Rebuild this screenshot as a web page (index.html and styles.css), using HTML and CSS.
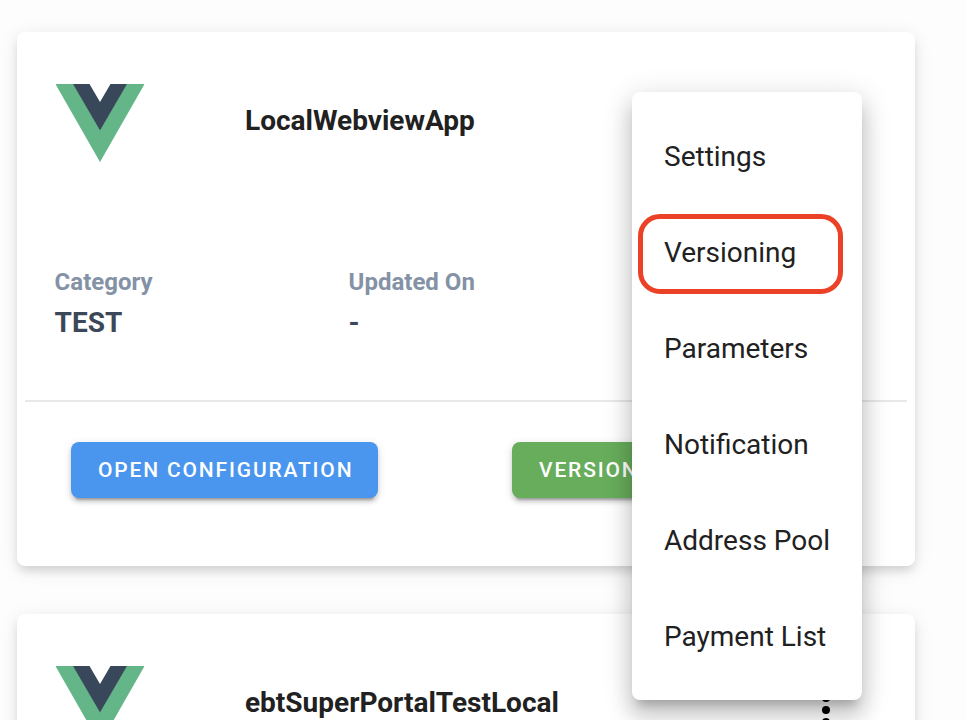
FILE: index.html
```html
<!DOCTYPE html>
<html lang="en">
<head>
<meta charset="utf-8">
<title>Apps</title>
<link rel="stylesheet" href="styles.css">
</head>
<body>
<main class="list">
  <article class="card">
    <header class="card-head">
      <svg class="logo" viewBox="0 0 88 78"><path fill="#64b587" d="M0 0H17.5L44 46 70.5 0H88V1L44 78 0 1Z"/><path fill="#384759" d="M17 0H33.5L44 18 54.500 0H71L44 46.500Z"/></svg>
      <h2 class="name">LocalWebviewApp</h2>
    </header>
    <dl class="facts">
      <div><dt>Category</dt><dd>TEST</dd></div>
      <div><dt>Updated On</dt><dd>-</dd></div>
    </dl>
    <hr class="rule">
    <div class="actions">
      <button class="btn blue">OPEN CONFIGURATION</button>
      <button class="btn green">VERSIONS</button>
    </div>
  </article>
  <article class="card">
    <header class="card-head">
      <svg class="logo" viewBox="0 0 88 78"><path fill="#64b587" d="M0 0H17.5L44 46 70.5 0H88V1L44 78 0 1Z"/><path fill="#384759" d="M17 0H33.5L44 18 54.500 0H71L44 46.500Z"/></svg>
      <h2 class="name">ebtSuperPortalTestLocal</h2>
      <svg class="dots" viewBox="0 0 8 32"><circle cx="4" cy="4" r="4"/><circle cx="4" cy="16" r="4"/><circle cx="4" cy="28" r="4"/></svg>
    </header>
  </article>
</main>
<nav class="menu">
  <a class="item">Settings</a>
  <a class="item marked">Versioning</a>
  <a class="item">Parameters</a>
  <a class="item">Notification</a>
  <a class="item">Address Pool</a>
  <a class="item">Payment List</a>
</nav>
</body>
</html>
```
FILE: styles.css
```css
*, *::after { box-sizing: border-box; }
html { overflow: hidden; }
body {
  margin: 0;
  height: 720px;
  overflow: hidden;
  position: relative;
  background: #fdfdfd;
  color: #212121;
  font-family: Roboto, sans-serif;
}
.list {
  display: flex;
  flex-direction: column;
  gap: 48px;
  width: 915px;
  padding: 32px 0 0 17px;
}
.card {
  height: 534px;
  flex: none;
  padding: 52px 8px 0;
  border-radius: 8px;
  background: #fff;
  box-shadow: 0 6px 10px -2px rgba(0,0,0,.12), 0 4px 18px rgba(0,0,0,.1);
}
.card-head {
  display: flex;
  height: 184px;
  padding-left: 31px;
}
.logo { width: 88px; height: 78px; }
.name {
  margin: 19px 0 0 101px;
  width: 400px;
  font-size: 28px;
  line-height: 36px;
  font-weight: 700;
}
.dots { width: 8px; height: 32px; margin: 28px 0 0 176.6px; }
.facts {
  display: flex;
  margin: 0 0 0 29.600px;
  height: 132px;
}
.facts div { width: 294px; }
dt {
  color: #8492a6;
  font-size: 24px;
  line-height: 28px;
  font-weight: 700;
}
dd {
  margin: 9px 0 0;
  color: #3c4858;
  font-size: 28px;
  line-height: 36px;
  font-weight: 700;
}
.rule {
  margin: 0;
  border: 0;
  height: 2px;
  background: #e8e8e8;
}
.actions {
  display: flex;
  gap: 134px;
  padding: 40px 0 0 46px;
}
.btn {
  height: 56px;
  padding: 0 0 0 27px;
  border: 0;
  border-radius: 8px;
  color: #fff;
  font: 500 21px Roboto, sans-serif;
  letter-spacing: 1.83px;
  text-align: left;
  white-space: nowrap;
  box-shadow: 0 6px 2px -4px rgba(0,0,0,.2), 0 4px 4px rgba(0,0,0,.14), 0 2px 10px rgba(0,0,0,.12);
}
.blue { width: 307px; background: #4a95ee; }
.green { width: 200px; background: #67ad5b; }
.menu {
  position: absolute;
  left: 632px;
  top: 92px;
  width: 230px;
  height: 608px;
  padding: 16px 0;
  border-radius: 8px;
  background: #fff;
  box-shadow: 0 10px 10px -6px rgba(0,0,0,.2), 0 16px 20px 2px rgba(0,0,0,.14), 0 6px 28px 4px rgba(0,0,0,.12);
}
.item {
  position: relative;
  display: block;
  height: 96px;
  padding-left: 32px;
  font-size: 28px;
  line-height: 97px;
}
.marked::after {
  content: "";
  position: absolute;
  left: 6px;
  top: 10px;
  width: 205px;
  height: 80px;
  border: 5px solid #eb4127;
  border-radius: 22px;
}
```
